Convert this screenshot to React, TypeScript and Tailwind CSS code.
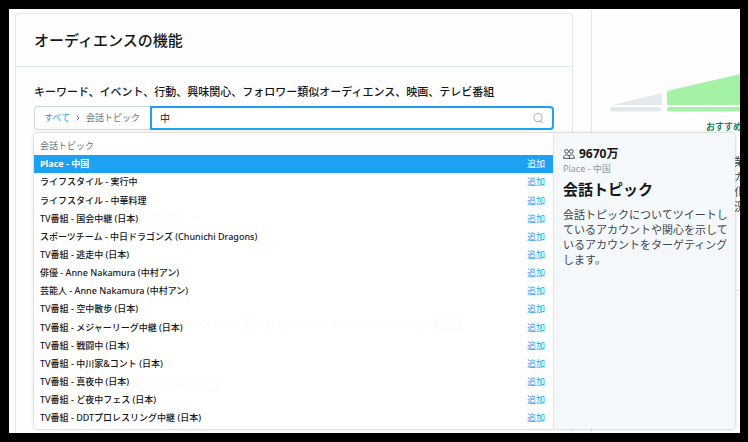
import React, { useState } from 'react';

const topics = [
  'Place - 中国',
  'ライフスタイル - 実行中',
  'ライフスタイル - 中華料理',
  'TV番組 - 国会中継 (日本)',
  'スポーツチーム - 中日ドラゴンズ (Chunichi Dragons)',
  'TV番組 - 逃走中 (日本)',
  '俳優 - Anne Nakamura (中村アン)',
  '芸能人 - Anne Nakamura (中村アン)',
  'TV番組 - 空中散歩 (日本)',
  'TV番組 - メジャーリーグ中継 (日本)',
  'TV番組 - 戦闘中 (日本)',
  'TV番組 - 中川家&コント (日本)',
  'TV番組 - 真夜中 (日本)',
  'TV番組 - ど夜中フェス (日本)',
  'TV番組 - DDTプロレスリング中継 (日本)'
];

function SearchIcon() {
  return (
    <svg viewBox="0 0 12 12" className="h-3 w-3 shrink-0" fill="none" stroke="#aab8c2" strokeWidth="1.1" strokeLinecap="round">
      <circle cx="6" cy="5.6" r="4.1" />
      <path d="M8.2 8.6 L9.4 10.2 H10.4" />
    </svg>);

}

function PeopleIcon() {
  return (
    <svg viewBox="0 0 12 12" className="h-3 w-3 shrink-0" fill="none" stroke="#3c4650" strokeWidth="0.9" strokeLinejoin="round">
      <circle cx="3.6" cy="3.4" r="1.9" />
      <circle cx="8.4" cy="3.4" r="1.9" />
      <path d="M0.6 10.4 C0.6 8.2 1.7 6.9 3.6 6.9 C4.6 6.9 5.4 7.2 6 7.9 C6.6 7.2 7.4 6.9 8.4 6.9 C10.3 6.9 11.4 8.2 11.4 10.4 Z" />
      <path d="M6 7.9 C6.4 8.6 6.6 9.4 6.6 10.4" />
    </svg>);

}

function SizeGauge() {
  return (
    <svg viewBox="0 0 130 40" className="block h-10 w-full" preserveAspectRatio="xMinYMin slice">
      <path d="M2 32 L52 20 V32 Z" fill="#e4e9ee" />
      <path d="M57 18 L130 1 V32 H57 Z" fill="#a3f2a6" />
      <rect x="0" y="34" width="51" height="4.5" rx="2" fill="#e1e8ed" />
      <rect x="57" y="34" width="80" height="4.5" rx="2" fill="#a3f2a6" />
    </svg>);

}

function TopicMenu() {
  const [selected, setSelected] = useState(0);
  return (
    <div className="absolute top-full left-0 z-10 mt-[3px] flex min-h-[296px] rounded-sm shadow-[0_0_3px_rgba(0,0,0,0.3)]">
      <div className="flex w-[519px] flex-col rounded-l-sm bg-white/98 pb-[2px]">
        <div className="flex h-[22px] items-center px-[6px] pt-1 text-[#66757f]">会話トピック</div>
        <ul className="flex grow flex-col">
          {topics.map((topic, i) =>
          <li key={topic} className="flex grow">
              <button
              type="button"
              onClick={() => setSelected(i)}
              className={
              i === selected ?
              'flex min-h-[18px] grow items-center justify-between bg-[#1da1f2] pr-2 pl-[6px] font-bold text-white' :
              'flex min-h-[18px] grow items-center justify-between pr-2 pl-[6px] font-medium text-[#14171a]'
              }>

                <span>{topic}</span>
                <span className={i === selected ? 'font-normal text-white' : 'font-normal text-[#1da1f2]'}>追加</span>
              </button>
            </li>
          )}
        </ul>
      </div>
      <aside className="w-[182px] rounded-r-sm border-l border-[#e1e8ed] bg-[#f5f8fa] pt-3 pl-[9px]">
        <div className="flex items-center gap-1 text-xs leading-[18px] font-bold text-[#14171a]">
          <PeopleIcon />
          <span>9670万</span>
        </div>
        <p className="leading-3 text-[#8899a6]">Place - 中国</p>
        <h2 className="mt-1 text-[15px] leading-5 font-bold text-[#14171a]">会話トピック</h2>
        <p className="mt-2 text-[11px] leading-[15px] text-[#3c4650]">
          会話トピックについてツイートしているアカウントや関心を示しているアカウントをターゲティングします。
        </p>
      </aside>
    </div>);

}

export default function App() {
  const [query, setQuery] = useState('中');
  return (
    <div className="h-screen overflow-hidden bg-black pt-[9px] pr-2 pb-[9px] pl-[9px] font-['Noto_Sans','Noto_Sans_CJK_JP',sans-serif] text-[9px]">
      <div className="flex h-full overflow-hidden bg-[#fefefe]">
        <main className="mt-1 ml-[6px] min-w-0 grow rounded-t border border-b-0 border-[#e1e8ed]">
          <h1 className="border-b border-[#e1e8ed] px-[18px] py-4 text-[15px] leading-5 font-medium text-[#14171a]">
            オーディエンスの機能
          </h1>
          <div className="px-[18px] pt-[17px]">
            <label htmlFor="topic" className="block text-[11px] leading-4 font-medium whitespace-nowrap text-[#14171a]">
              キーワード、イベント、行動、興味関心、フォロワー類似オーディエンス、映画、テレビ番組
            </label>
            <div className="relative mt-[6px] flex h-6">
              <nav className="flex w-[116px] shrink-0 items-center gap-[6px] rounded-l-sm border border-r-0 border-[#ccd6dd] pl-[9px] whitespace-nowrap text-[#66757f]">
                <a href="#all" className="text-[#1da1f2]">すべて</a>
                <svg viewBox="0 0 4 6" className="h-[6px] w-1" fill="none" stroke="#66757f" strokeWidth="1">
                  <path d="M0.7 0.6 L3 3 L0.7 5.4" />
                </svg>
                <span>会話トピック</span>
              </nav>
              <div className="flex min-w-0 grow items-center rounded-r-sm border-2 border-[#1da1f2] bg-white px-2">
                <input
                  id="topic"
                  type="text"
                  value={query}
                  onChange={(e) => setQuery(e.target.value)}
                  className="min-w-0 grow text-[10px] text-[#14171a] outline-none" />

                <SearchIcon />
              </div>
              <TopicMenu />
            </div>
            <div className="pt-20 text-[11px] leading-4 whitespace-nowrap text-[#14171a]">
              <p>フォロワーが似ているアカウント</p>
              <p className="mt-[91px]">
                ツイートのリーチまたはエンゲージメント歴があるユーザーをリターゲティング
                <span className="ml-1 bg-[#14806a] px-1 text-[9px] font-bold text-white">NEW</span>
              </p>
              <p className="mt-[42px]">
                オーディエンスの条件を広げる
                <span className="ml-1 bg-[#14806a] px-1 text-[9px] font-bold text-white">NEW</span>
              </p>
            </div>
          </div>
        </main>
        <aside className="ml-[18px] w-[149px] shrink-0 border-l border-[#e1e8ed]">
          <div className="pt-[64px] pl-[18px]">
            <SizeGauge />
            <p className="mt-[6px] pl-24 leading-4 font-bold whitespace-nowrap text-[#17806a]">おすすめ</p>
          </div>
          <div className="h-[156px] border-b border-[#e1e8ed] pt-[19px] pl-[142px] text-[11px] leading-[15px] text-[#3c4650]">
            <p className="w-3">業カ化況</p>
          </div>
        </aside>
      </div>
    </div>);

}
